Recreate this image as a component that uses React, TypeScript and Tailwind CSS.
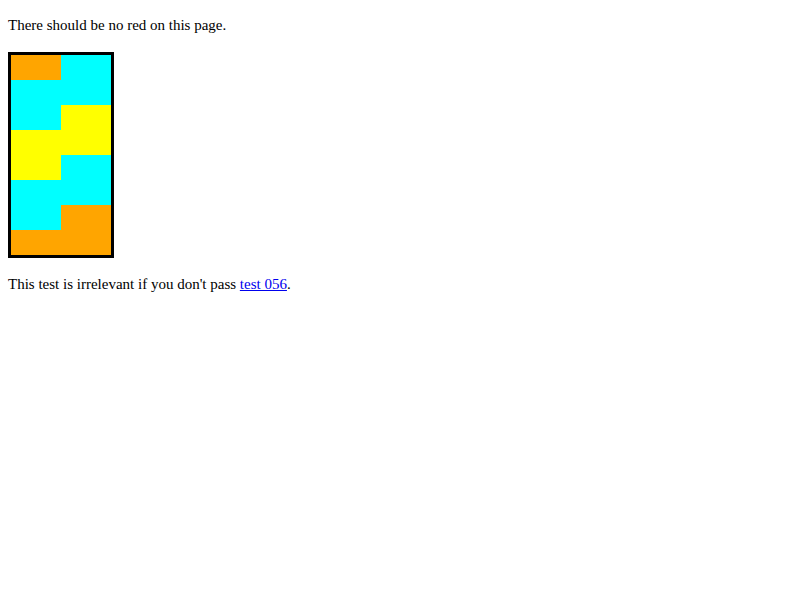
export default function App() {
  const rows: [string, string][] = [
    ["bg-[#ffa500]", "bg-[#00ffff]"],
    ["bg-[#00ffff]", "bg-[#00ffff]"],
    ["bg-[#00ffff]", "bg-[#ffff00]"],
    ["bg-[#ffff00]", "bg-[#ffff00]"],
    ["bg-[#ffff00]", "bg-[#00ffff]"],
    ["bg-[#00ffff]", "bg-[#00ffff]"],
    ["bg-[#00ffff]", "bg-[#ffa500]"],
    ["bg-[#ffa500]", "bg-[#ffa500]"],
  ];
  return (
    <div className="bg-white min-h-[600px] px-2 pt-4 text-black text-[15px] leading-[18px] [font-family:'Liberation_Serif',serif]">
      <p>There should be no red on this page.</p>
      <div className="mt-[18px] w-[106px] border-[3px] border-black grid grid-cols-2">
        {rows.map((r, i) => [
          <div key={`a${i}`} className={`h-[25px] ${r[0]}`} />,
          <div key={`b${i}`} className={`h-[25px] ${r[1]}`} />,
        ])}
      </div>
      <p className="mt-[17px]">
        This test is irrelevant if you don't pass{" "}
        <a href="#" className="text-[#0000ee] underline">test 056</a>.
      </p>
    </div>
  );
}
